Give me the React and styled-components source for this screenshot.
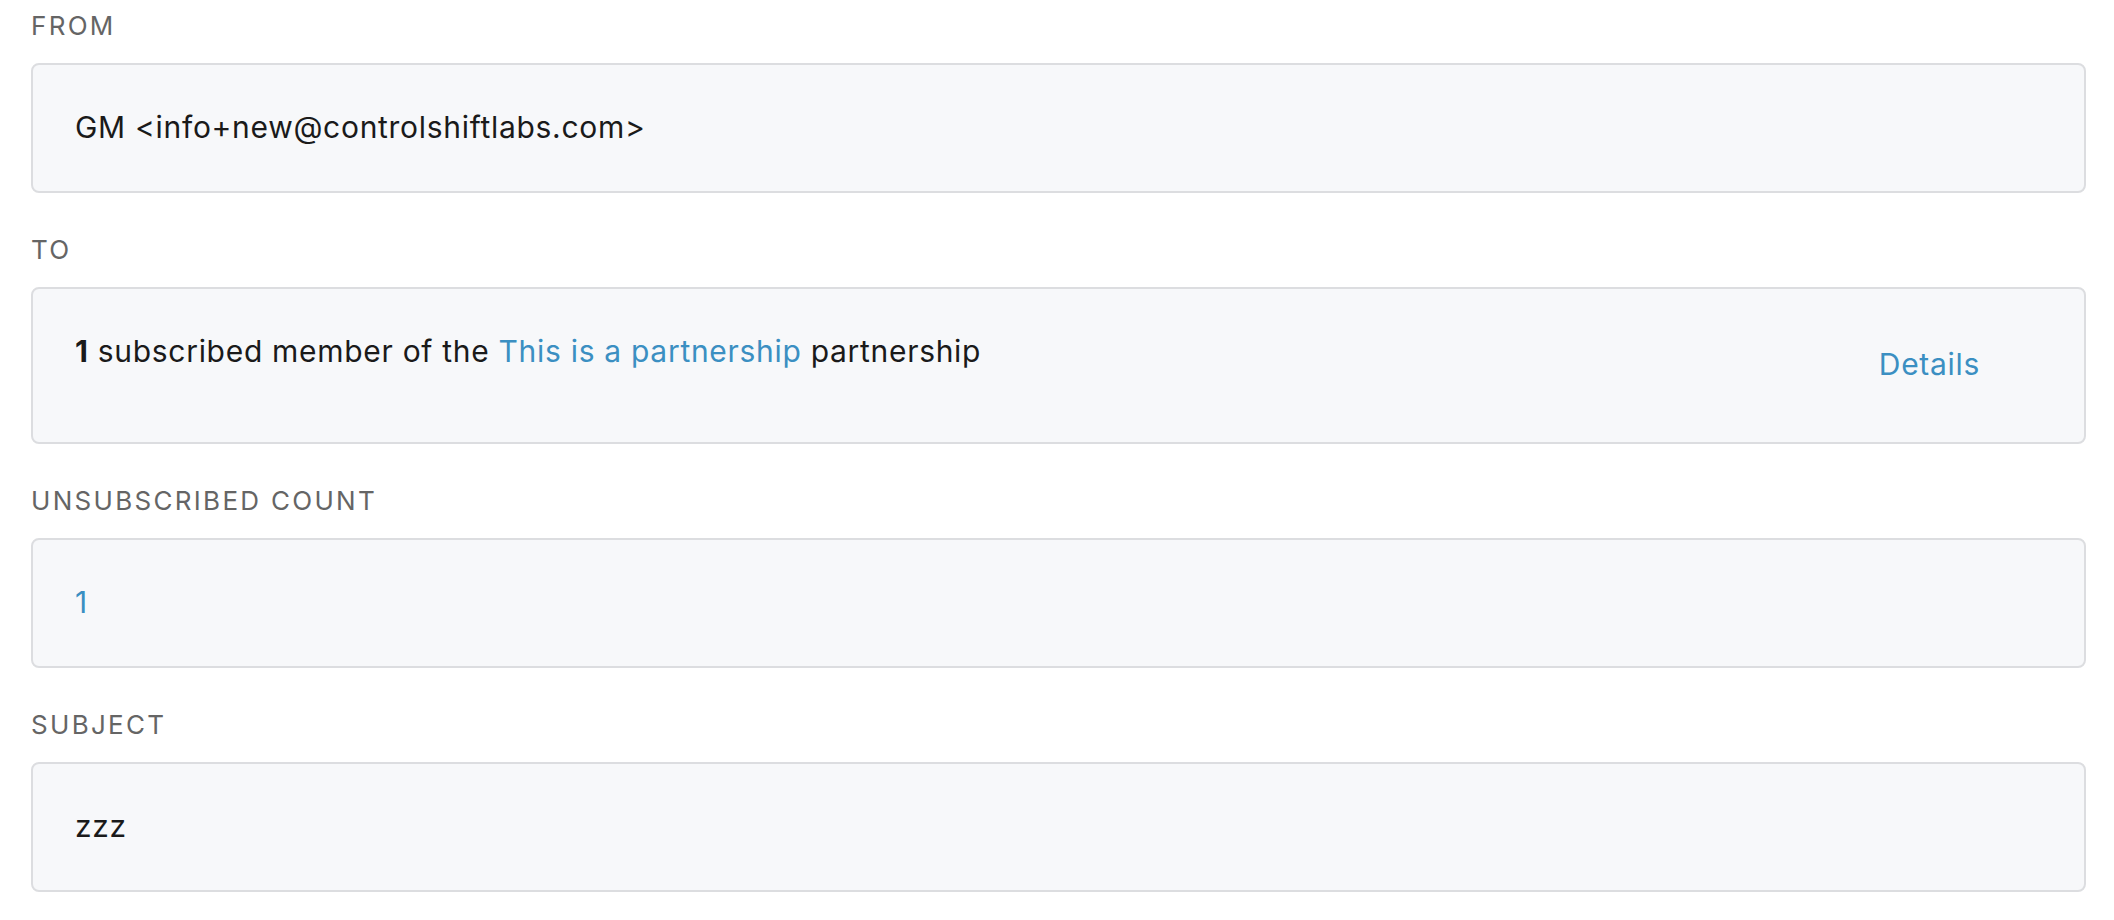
import React from 'react';
import styled, { createGlobalStyle } from 'styled-components';

const GlobalStyle = createGlobalStyle`
  body {
    margin: 0;
    background: #ffffff;
    font-family: Inter, 'Liberation Sans', Arial, sans-serif;
  }
`;

const Page = styled.div`
  padding: 8px 28px 0 31px;
`;

const Field = styled.div`
  margin-bottom: 39px;
`;

const Label = styled.div`
  font-size: 26px;
  line-height: 36px;
  letter-spacing: 2.3px;
  text-transform: uppercase;
  color: #656565;
  margin-bottom: 19px;
`;

const Box = styled.div`
  display: flex;
  justify-content: space-between;
  align-items: flex-start;
  background: #f7f8fa;
  border: 2px solid #dcdde0;
  border-radius: 8px;
  padding: 40px 42px 41px 42px;
  font-size: 30px;
  line-height: 45px;
  letter-spacing: 0.7px;
  color: #1a1a1a;
`;

const Value = styled.div`
  color: ${props => (props.link ? '#3b8fc2' : '#1a1a1a')};
`;

const Link = styled.a`
  color: #3b8fc2;
  text-decoration: none;
`;

const DetailsLink = styled.a`
  color: #3b8fc2;
  text-decoration: none;
  padding: 13px 62px 14px 24px;
`;

const Count = styled.b`
  font-weight: 700;
`;

export default function App() {
  return (
    <Page>
      <GlobalStyle />
      <Field>
        <Label>From</Label>
        <Box>
          <Value>GM &lt;info+new@controlshiftlabs.com&gt;</Value>
        </Box>
      </Field>
      <Field>
        <Label>To</Label>
        <Box>
          <Value>
            <Count>1</Count> subscribed member of the <Link href="#">This is a partnership</Link> partnership
          </Value>
          <DetailsLink href="#">Details</DetailsLink>
        </Box>
      </Field>
      <Field>
        <Label>Unsubscribed count</Label>
        <Box>
          <Value link>1</Value>
        </Box>
      </Field>
      <Field>
        <Label>Subject</Label>
        <Box>
          <Value>zzz</Value>
        </Box>
      </Field>
    </Page>
  );
}
